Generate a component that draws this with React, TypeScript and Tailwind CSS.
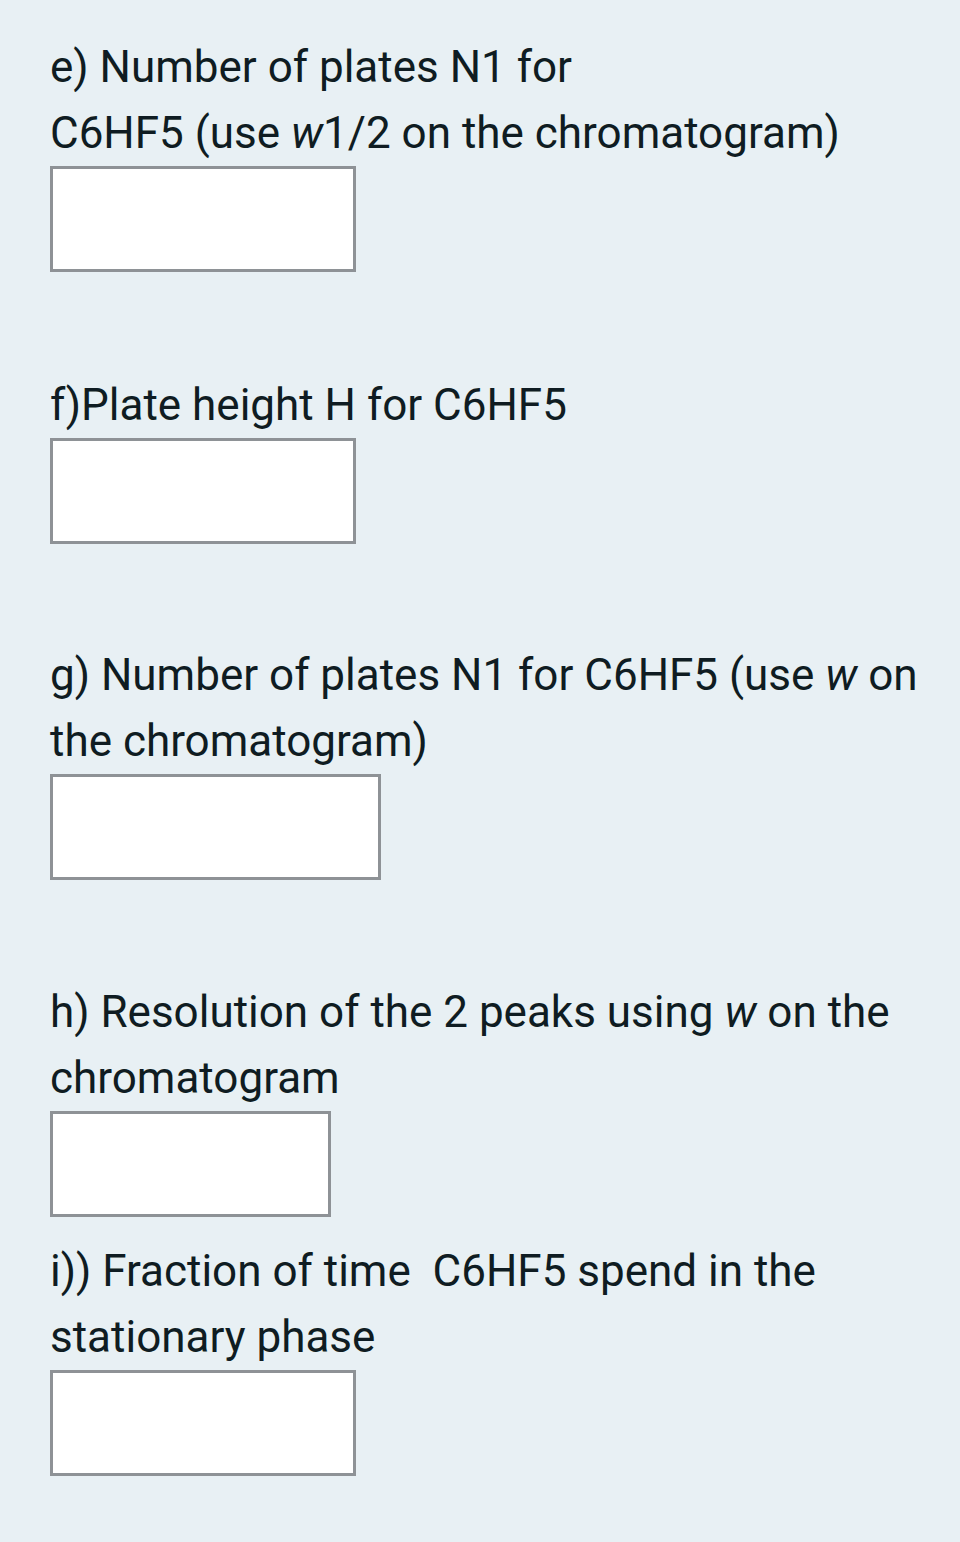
const Box = ({ w }: { w: string }) => (
  <div className={`${w} h-[106px] bg-white border-[3px] border-[#8e9296]`} />
)

export default function App() {
  return (
    <main
      className="min-h-[1542px] bg-[#e8f0f4] px-[50px] pt-[34px] text-[#0f1c22] text-[44px] leading-[66px]"
      style={{ fontFamily: 'Roboto, "Noto Sans", sans-serif' }}
    >
      <p>e) Number of plates N1 for</p>
      <p>
        C6HF5 (use <i>w</i>1/2 on the chromatogram)
      </p>
      <Box w="w-[306px]" />

      <p className="mt-[100px]">f)Plate height H for C6HF5</p>
      <Box w="w-[306px]" />

      <p className="mt-[98px] w-[880px]">
        g) Number of plates N1 for C6HF5 (use <i>w</i> on the chromatogram)
      </p>
      <Box w="w-[331px]" />

      <p className="mt-[99px] w-[880px]">
        h) Resolution of the 2 peaks using <i>w</i> on the chromatogram
      </p>
      <Box w="w-[281px]" />

      <p className="mt-[21px] w-[880px]">
        i)) Fraction of time&nbsp; C6HF5 spend in the stationary phase
      </p>
      <Box w="w-[306px]" />
    </main>
  )
}
